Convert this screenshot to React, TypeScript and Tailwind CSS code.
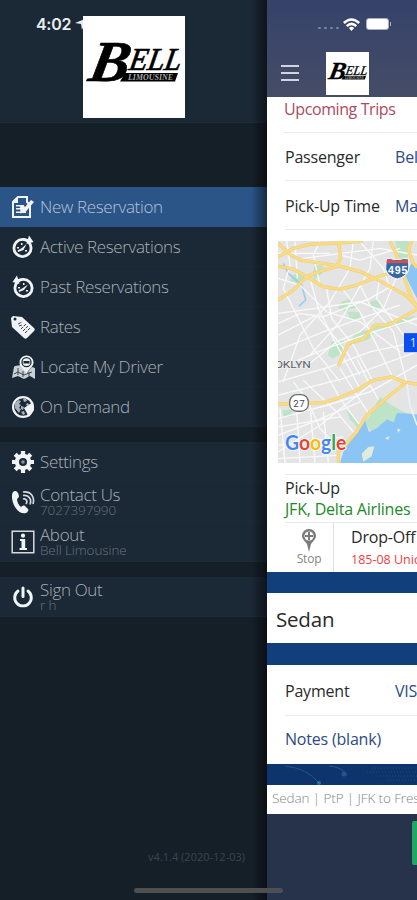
import type { ReactNode } from "react";
import clsx from "clsx";

function BellLogo({ className }: { className?: string }) {
  return (
    <svg viewBox="0 0 102 102" className={clsx("shrink-0 bg-white", className)}>
      <g fontFamily="Liberation Serif, serif" fontStyle="italic" fontWeight="bold">
        <text
          transform="translate(4 65) skewX(-11)"
          fontSize="58"
          textLength="40"
          lengthAdjust="spacingAndGlyphs"
          stroke="#000"
          strokeWidth=".6"
        >
          B
        </text>
        <text
          transform="translate(45 54) skewX(-10)"
          fontSize="32"
          fontWeight="normal"
          textLength="52"
          lengthAdjust="spacingAndGlyphs"
          stroke="#000"
          strokeWidth=".7"
        >
          ELL
        </text>
        <path d="M42 57h53l-3 8.500H37z" />
        <text x="45" y="64" fontSize="8.500" fill="#aaa" textLength="45" lengthAdjust="spacingAndGlyphs">
          LIMOUSINE
        </text>
      </g>
    </svg>
  );
}

function Icon({ children }: { children: ReactNode }) {
  return (
    <svg viewBox="0 0 24 24" className="h-6 w-6 shrink-0" fill="#f1f4f6">
      {children}
    </svg>
  );
}

const noteIcon = (
  <Icon>
    <path d="M7 2h9v5l3 3v12H2V7z" fill="#2b5587" stroke="#f1f4f6" strokeWidth="2" />
    <path d="M7 1v7H1V7z" />
    <path d="M5 10h8v1.500H5zM5 13h5v1.500H5zM5 16.500h10V18H5z" />
    <path d="M9 11l3-1 2 2 6-7 3 2-8.500 10-5 1.500z" />
  </Icon>
);

const activeIcon = (
  <Icon>
    <circle cx="11.500" cy="13" r="8.600" fill="none" stroke="#f1f4f6" strokeWidth="2.800" />
    <path d="M12 3l5 1 1-3.500L22.500 7l-7 2 1-3-4.500-1z" />
    <path d="M15.500 9l-3 6-5.500 2-.5-1.500 4.500-2.500z" />
    <path d="M6 12h2v1.500H6zM10 8h1.500v2H10zM14 15h2v1.500h-2z" />
  </Icon>
);

const pastIcon = (
  <Icon>
    <circle cx="12.500" cy="13" r="8.600" fill="none" stroke="#f1f4f6" strokeWidth="2.800" />
    <path d="M12 3L7 4 6 .5 1.500 7l7 2-1-3L12 5z" />
    <path d="M17 9.500l-4 5.500-5 2-.5-1.500 4-2.300z" />
    <path d="M7 12h2v1.500H7zM12 8h1.500v2H12zM15 15h2v1.500h-2z" />
  </Icon>
);

const tagIcon = (
  <Icon>
    <path
      fillRule="evenodd"
      d="M2 1l9 1 12 11c1 1 1 2 0 3l-7 7c-1 1-2 1-3 0L1 12 0 3zM4 2.500a1.500 1.500 0 100 3 1.500 1.500 0 000-3z"
    />
    <path d="M7 9l4-2M8 11l3-1M10 14l5-5M12 16l5-5M14 18l5-5" stroke="#1b2835" strokeWidth=".9" strokeDasharray="3 1" />
  </Icon>
);

const driverIcon = (
  <Icon>
    <path d="M4 11l6-1 6 8 5-6 3 1v11l-5-3-6 3-6-3-6 2 2-11z" fill="#c9d0d6" />
    <path d="M7 13v7M12 16v6M18 17v5M3 19l4-2 6 3 8-3" stroke="#1b2835" strokeWidth=".8" fill="none" />
    <path d="M15.500.5a7 7 0 017 7c0 4-4 6-7 11-3-5-7-7-7-11a7 7 0 017-7z" />
    <circle cx="15.500" cy="7.200" r="4.500" fill="none" stroke="#1b2835" strokeWidth="1.300" />
    <path d="M12.500 6h6v2.500h-6z" fill="#1b2835" />
  </Icon>
);

const globeIcon = (
  <Icon>
    <circle cx="12" cy="12" r="9.900" fill="#1b2835" stroke="#f1f4f6" strokeWidth="2.200" />
    <path d="M4 8l3-3 3 1-2 3 2 1-2 3 2 1-2 4-4-5zM12 4l3-1 1 3-3 1zM10 11l3 1-1 3-2-1zM15 9l2-1 1 2-2 1zM10 17l3-1 1 3-2 1z" fill="#aab2b9" />
    <path d="M13 13l9-6 1 8-5 7z" />
  </Icon>
);

const gearIcon = (
  <Icon>
    <path d="M12 1v22M1 12h22M4.200 4.200l15.600 15.600M4.200 19.800L19.800 4.200" stroke="#f1f4f6" strokeWidth="4.200" />
    <circle cx="12" cy="12" r="8.200" />
    <circle cx="12" cy="12" r="4" fill="#1b2835" />
    <circle cx="12" cy="12" r="1.800" fill="#8b949c" />
  </Icon>
);

const phoneIcon = (
  <Icon>
    <path d="M2 2c2-2 4-1 5 1l1 3c0 2-2 2-2 4 1 4 2 5 4 7 1-1 3-2 4-1l3 3c1 1 0 3-2 4-4 1-8-1-11-6S0 5 2 2z" />
    <path
      d="M12 9c3-1 5 2 3 5M12 5.500c6-1 9 4 7 9M12 2c8-1 12 5 10 12"
      fill="none"
      stroke="#d5dade"
      strokeWidth="1.700"
    />
  </Icon>
);

const infoIcon = (
  <Icon>
    <path d="M1.200 1.200h21.600v21.600H1.200z" fill="none" stroke="#d5dade" strokeWidth="1.500" />
    <circle cx="12" cy="5.700" r="2.100" />
    <path d="M9 9h5.200v9H16v2H8.500v-2h2v-7H9z" />
  </Icon>
);

const powerIcon = (
  <Icon>
    <path d="M7 6a8.300 8.300 0 1010 0" fill="none" stroke="#f1f4f6" strokeWidth="2.900" strokeLinecap="round" />
    <path d="M12 3v8.500" stroke="#f1f4f6" strokeWidth="3" strokeLinecap="round" />
  </Icon>
);

interface MenuRowProps {
  icon: ReactNode;
  label: string;
  detail?: string;
  active?: boolean;
}

function MenuRow({ icon, label, detail, active }: MenuRowProps) {
  return (
    <div
      className={clsx(
        "flex h-10 items-center gap-[5px] border-b pl-[11px]",
        active ? "border-[#2b5587] bg-[#2b5587] text-[#b3c4da]" : "border-[#1e2b37] bg-[#1b2835] text-[#a9b2ba]",
      )}
    >
      {icon}
      <div className="font-light whitespace-nowrap">
        <div className={clsx("text-[17px] tracking-[-0.35px]", detail ? "mt-[-1px] leading-[17px]" : "leading-6")}>
          {label}
        </div>
        {detail && <div className="text-[13.5px] leading-[14px] tracking-[-0.1px] text-[#66747f]">{detail}</div>}
      </div>
    </div>
  );
}

function Sidebar() {
  return (
    <aside className="flex w-[267px] shrink-0 flex-col bg-[#151f28]">
      <div className="flex h-[123px] border-b border-[#202d39] bg-[#1b2835] pt-4 pl-9">
        <div className="flex w-[47px] items-start gap-1 overflow-hidden font-['Inter',sans-serif] text-[16px] leading-4 font-semibold text-[#e9edf2]">
          <span className="shrink-0 tracking-[-0.3px]">4:02</span>
          <svg viewBox="0 0 12 12" className="mt-[2px] h-3 w-3 shrink-0" fill="#e9edf2">
            <path d="M0 5L12 0 7 12 6 6z" />
          </svg>
        </div>
        <BellLogo className="h-[102px] w-[102px]" />
      </div>
      <nav className="pt-16">
        <MenuRow icon={noteIcon} label="New Reservation" active />
        <MenuRow icon={activeIcon} label="Active Reservations" />
        <MenuRow icon={pastIcon} label="Past Reservations" />
        <MenuRow icon={tagIcon} label="Rates" />
        <MenuRow icon={driverIcon} label="Locate My Driver" />
        <MenuRow icon={globeIcon} label="On Demand" />
        <div className="mt-[15px]">
          <MenuRow icon={gearIcon} label="Settings" />
          <MenuRow icon={phoneIcon} label="Contact Us" detail="7027397990" />
          <MenuRow icon={infoIcon} label="About" detail="Bell Limousine" />
        </div>
        <div className="mt-[15px]">
          <MenuRow icon={powerIcon} label="Sign Out" detail="r h" />
        </div>
      </nav>
      <div className="mt-auto pr-[22px] pb-9 text-right text-[11px] leading-[14px] text-[#3b4650]">
        v4.1.4 (2020-12-03)
      </div>
    </aside>
  );
}

const streets = [
  "M54 235L150 222 300 200 471 270",
  "M54 265L120 235 190 245 330 190 400 150",
  "M54 300L170 240 260 350 300 420",
  "M54 345L190 290 330 240 420 210",
  "M54 400L200 340 340 290 471 250",
  "M54 440L210 395 330 350 471 320",
  "M54 480L250 430 471 350",
  "M54 550L200 510 330 470 471 390",
  "M54 600L160 560 300 500",
  "M54 650L180 570 330 450",
  "M80 18L90 90 70 160 110 240 160 340 240 440",
  "M150 130L175 220 230 330 300 460",
  "M200 160L215 250 280 330 340 440",
  "M250 165L300 230 350 330 400 430",
  "M300 150L330 210 400 290 440 440",
  "M360 120L350 190 430 300 471 350",
  "M420 100L370 220 300 290 230 320 130 400",
  "M280 18L270 100 210 200 120 300 70 440",
  "M340 18L330 100 240 260 150 360",
  "M54 130L120 150 200 230 300 260 420 350",
  "M100 440L140 490 180 580 240 640",
  "M130 435L230 530 280 590",
  "M190 400L240 490 300 570",
  "M240 400L290 480 330 540",
  "M290 370L330 450 360 500",
  "M60 520L75 683M110 520L120 683M150 510L165 683M190 530L205 683",
  "M54 575L240 545M54 630L250 605M54 670L230 660",
  "M105 20L112 130M180 18L160 60 180 150M54 55L210 55M130 70L360 40 471 60",
  "M300 20L370 100 390 160M240 60L300 75 420 40",
];

const highways = [
  "M54 66L100 40 150 28 235 24 310 18",
  "M54 24L90 58 120 75 190 85 240 93 300 110 345 130 400 160 440 182 471 215",
  "M235 18L242 70 228 95 170 112 140 125 100 165 54 195",
  "M54 93L100 102 140 125 190 155 240 163 290 150 340 130 400 110",
  "M390 18L410 60 430 120 455 190 471 215",
  "M455 18L445 45 460 85 471 98",
  "M471 222L440 240 385 270 345 270 310 310 265 325 235 392",
  "M54 507L190 502 240 487 290 465 340 435 395 425 430 440 471 447",
  "M435 445L390 480 320 540 290 590 255 630 235 650V683",
];

function RouteMap() {
  return (
    <svg viewBox="54 18 417 665" preserveAspectRatio="none" className="block h-[222px] w-full bg-[#e4e4e4]">
      <g fill="#bfe3c6">
        <path d="M95 120l35-8 8 20-30 14-18-10zM165 90l25 2-4 24-22 16-8-12zM405 18h40l8 30-20 35-20-20z" />
        <path d="M245 200l30-10 20 28-25 4-12 8-24-12zM330 200l25-8 8 25-32 6zM262 230h35l6 22-32 4z" />
        <path d="M471 240l-45 28-30 10-50 12-20 22-60 20 18-38 40-10 50-20 50-14zM215 320l38-5-10 40-25 15-15-10zM68 525l28-2 2 20-28 2z" />
        <path d="M258 525l15 12 28 35-6 8-25-28z" />
      </g>
      <path d="M435 120l36 70V100l-16-15z" fill="#8ac5f5" />
      <path d="M70 85l15 30 40 35 12 45-20 18" fill="none" stroke="#9cccf3" strokeWidth="5" />
      <g fill="none" stroke="#fafafa" strokeWidth="4">
        {streets.map((d) => (
          <path key={d} d={d} />
        ))}
      </g>
      <path d="M315 560l15-20 30-55 35 25 45 25 31 5v30h-60l-78 20z" fill="#bfe3c6" />
      <path d="M240 683l12-40 38-53 25-35 12 35 22-10 32-27 20 8 10-28 30 2 30 3v145z" fill="#8ac5f5" />
      <path d="M305 655l20-20 18-2-8 30-25 16zM375 608l15-6-6 12zM412 580l10 3-8 10z" fill="#e1ebdc" />
      <path d="M440 440l10 70 21 60" fill="none" stroke="#eaf2f8" strokeWidth="5" />
      <g fill="none" stroke="#f0cd6c" strokeWidth="10" strokeLinejoin="round">
        {highways.map((d) => (
          <path key={d} d={d} />
        ))}
      </g>
      <g fill="none" stroke="#fadc86" strokeWidth="7" strokeLinejoin="round">
        {highways.map((d) => (
          <path key={d} d={d} />
        ))}
      </g>
      <path
        d="M380 74l8-4q22 7 46 0l10 4q4 18 2 30-6 22-34 28-28-6-35-28 0-16 3-30z"
        fill="#3567a5"
        stroke="#fff"
        strokeWidth="3"
      />
      <path d="M381 72q30 8 62 0l2 13h-66z" fill="#c8525a" />
      <text x="384" y="117" fontSize="32" fontWeight="bold" fill="#fff" textLength="58" fontFamily="Liberation Sans, sans-serif">
        495
      </text>
      <path d="M432 294h39v57h-39z" fill="#0b4ff0" />
      <text x="449" y="335" fontSize="36" fill="#dfe8ff" fontFamily="Open Sans, sans-serif">
        19
      </text>
      <text
        x="44"
        y="398"
        fontSize="29"
        fill="#5b6167"
        stroke="#eee"
        strokeWidth="5"
        paintOrder="stroke"
        textLength="108"
        lengthAdjust="spacingAndGlyphs"
        fontFamily="Roboto, sans-serif"
      >
        OKLYN
      </text>
      <rect x="89" y="478" width="56" height="50" rx="22" fill="#fff" stroke="#6c7074" strokeWidth="4" />
      <text x="100" y="514" fontSize="29" fill="#45494d" textLength="34" fontFamily="Roboto, sans-serif">
        27
      </text>
      <text
        x="75"
        y="643"
        fontSize="63"
        fontWeight="bold"
        fontFamily="Lato, sans-serif"
        textLength="184"
        lengthAdjust="spacingAndGlyphs"
        stroke="#fff"
        strokeWidth="5"
        paintOrder="stroke"
      >
        <tspan fill="#4285f4">G</tspan>
        <tspan fill="#ea4335">o</tspan>
        <tspan fill="#fbbc05">o</tspan>
        <tspan fill="#4285f4">g</tspan>
        <tspan fill="#34a853">l</tspan>
        <tspan fill="#ea4335">e</tspan>
      </text>
    </svg>
  );
}

function Field({ label, value }: { label: string; value: string }) {
  return (
    <div className="flex h-full items-center pt-px">
      <span className="w-[110px] shrink-0">{label}</span>
      <span className="text-[#2c4a86]">{value}</span>
    </div>
  );
}

function TripHeader() {
  return (
    <header className="h-[97px] bg-linear-to-b from-[#36426a] to-[#454c66]">
      <div className="flex h-[52px] items-center pl-[51px]">
        <div className="mt-1 flex gap-[3px]">
          {[0, 1, 2, 3].map((n) => (
            <i key={n} className="h-[2px] w-[3px] rounded-full bg-[#7c84a0]" />
          ))}
        </div>
        <svg viewBox="0 0 16 12" className="mt-[-4px] ml-1 h-[13px] w-[17px]" fill="none" stroke="#fff" strokeWidth="2.400">
          <path d="M.8 4.600Q8-2 15.200 4.600M3.500 7.500Q8 3.400 12.500 7.500" />
          <path d="M5.500 9.200Q8 7.200 10.500 9.200L8 12z" fill="#fff" stroke="none" />
        </svg>
        <div className="mt-[-4px] ml-[6px] h-3 w-[23px] rounded-[3px] border border-[#aab0c3] bg-white" />
        <div className="mt-[-4px] ml-px h-1 w-px bg-[#aab0c3]" />
      </div>
      <div className="flex items-start">
        <div className="mt-[13px] ml-[14px] flex w-[18px] flex-col gap-[5px]">
          <i className="h-[2px] bg-[#d0d4de]" />
          <i className="h-[2px] bg-[#d0d4de]" />
          <i className="h-[2px] bg-[#d0d4de]" />
        </div>
        <BellLogo className="ml-[27px] h-[43px] w-[43px]" />
      </div>
    </header>
  );
}

function TripPanel() {
  return (
    <main className="flex w-[150px] flex-col overflow-hidden bg-[#103f7c] text-[16px] tracking-[-0.2px] whitespace-nowrap text-[#2a2a2a]">
      <TripHeader />
      <section className="h-[475px] bg-white">
        <div className="pl-[18px]">
          <div className="-ml-px h-9 border-b border-[#ebebeb] leading-[25px] tracking-[-0.4px] text-[#ad4a5e]">
            Upcoming Trips
          </div>
          <div className="h-12 border-b border-[#ebebeb]">
            <Field label="Passenger" value="Bell" />
          </div>
          <div className="h-[49px] border-b border-[#ebebeb]">
            <Field label="Pick-Up Time" value="May" />
          </div>
        </div>
        <div className="pt-[11px] pb-[11px] pl-[11px]">
          <RouteMap />
        </div>
        <div className="ml-[18px] h-[49px] border-y border-[#ebebeb] pt-[3px] leading-[21px]">
          <div>Pick-Up</div>
          <div className="text-[#1c8a26]">JFK, Delta Airlines</div>
        </div>
        <div className="ml-[18px] flex h-[49px]">
          <div className="flex w-[49px] shrink-0 flex-col items-center border-r border-[#e0e0e0] pt-[6px] text-[12px] leading-[13px] text-[#858585]">
            <svg viewBox="0 0 14 23" className="h-[23px] w-[14px]">
              <path d="M7 0a6.800 6.800 0 017 7c0 3-3 5-5 8l-2 8-2-8C3 12 0 10 0 7a6.800 6.800 0 017-7z" fill="#7b7b7b" />
              <circle cx="7" cy="7" r="4.600" fill="#fff" />
              <path d="M7 3v8M3 7h8" stroke="#7b7b7b" strokeWidth="2" />
            </svg>
            Stop
          </div>
          <div className="pt-[3px] pl-[17px]">
            <div className="leading-[22px]">Drop-Off</div>
            <div className="text-[12.5px] leading-[24px] tracking-normal text-[#ee3e42]">185-08 Union</div>
          </div>
        </div>
      </section>
      <section className="mt-[21px] flex h-[50px] items-center bg-white pt-[2px] pl-[9px] text-[20.5px]">Sedan</section>
      <section className="mt-[22px] h-[99px] bg-white pl-[18px]">
        <div className="h-[51px] border-b border-[#ebebeb]">
          <Field label="Payment" value="VISA" />
        </div>
        <div className="flex h-[46px] items-center text-[#2c4a86]">Notes (blank)</div>
      </section>
      <svg viewBox="0 0 150 21" className="h-[21px] w-[150px] shrink-0 bg-[#0e356b]" fill="none">
        <path d="M18 2Q40 4 52 19M62 2Q75 3 80 11" stroke="#24558c" />
        <circle cx="52" cy="19" r="2" fill="#2c6fae" />
        <circle cx="77" cy="10" r="2.500" fill="#24558c" />
        <path d="M105 4h45M100 8h50M110 12h40M120 16h30" stroke="#214b7d" strokeDasharray="1 2" />
      </svg>
      <section className="h-[29px] bg-white pl-[5px] text-[13.5px] leading-[26px] font-light tracking-[-0.1px] text-[#858585]">
        Sedan | PtP | JFK to Fresh
      </section>
      <footer className="flex grow justify-end bg-[#27324b] pt-[7px]">
        <div className="h-11 w-[5px] rounded-l-[2px] bg-[#20a863]" />
      </footer>
    </main>
  );
}

export default function App() {
  return (
    <div className="relative flex h-[900px] w-[417px] overflow-hidden bg-[#151f28] font-['Open_Sans',sans-serif]">
      <Sidebar />
      <TripPanel />
      {/* shade that the open page casts on the menu */}
      <div className="absolute inset-y-0 left-[251px] w-4 bg-linear-to-r from-transparent to-black/50" />
      <div className="absolute top-[888px] left-[134px] h-[5px] w-[149px] rounded-full bg-[#4d4f50]" />
    </div>
  );
}
